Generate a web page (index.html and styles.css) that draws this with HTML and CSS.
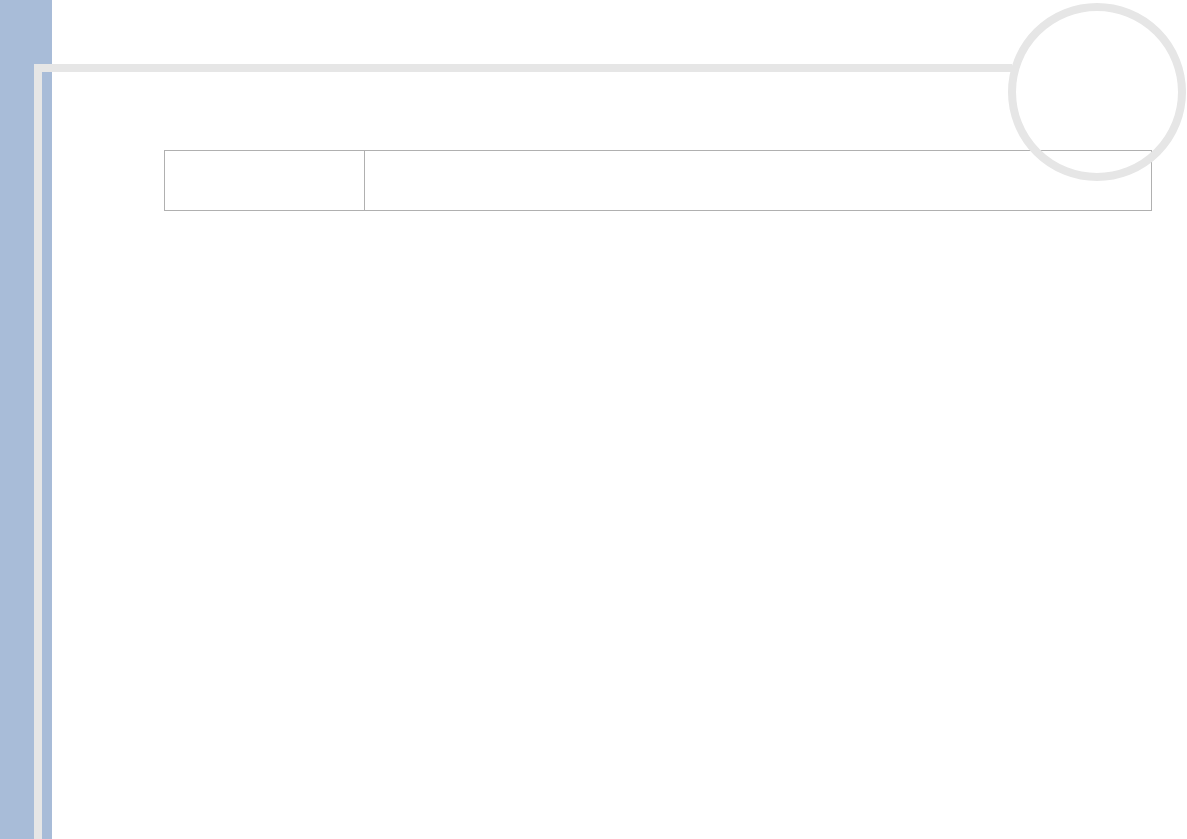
FILE: index.html
```html
<!DOCTYPE html>
<html lang="en">
<head>
    <meta charset="UTF-8">
    <meta name="viewport" content="width=device-width, initial-scale=1.0">
    <title>Page</title>
    <link rel="stylesheet" href="styles.css">
</head>
<body>
    <div class="sidebar"></div>

    <div class="main">
        <div class="rule"></div>
        <div class="frame">
            <table class="info-table">
                <tr>
                    <td class="label-cell"></td>
                    <td class="value-cell"></td>
                </tr>
            </table>
        </div>
    </div>

    <div class="ring"></div>
</body>
</html>
```

FILE: styles.css
```css
* {
    box-sizing: border-box;
    margin: 0;
    padding: 0;
}

body {
    display: flex;
    min-height: 100vh;
    background-color: white;
    font-family: "Liberation Sans", Arial, sans-serif;
}

.sidebar {
    width: 52px;
    flex-shrink: 0;
    background-color: #a8bcd8;
}

.main {
    flex: 1;
    display: flex;
    flex-direction: column;
    margin-left: -18px;
    padding-top: 64px;
}

.rule {
    width: 978px;
    height: 8px;
    background-color: #e6e6e6;
}

.frame {
    flex: 1;
    border-left: 8px solid #e6e6e6;
    padding: 78px 0 0 122px;
}

.info-table {
    width: 988px;
    border-collapse: collapse;
}

.info-table td {
    height: 60px;
    border: 1px solid #b0b0b0;
}

.label-cell {
    width: 200px;
}

/* decorative circle in the top right corner */
.ring {
    position: absolute;
    left: 1008px;
    top: 3px;
    width: 178px;
    height: 178px;
    border: 8px solid #e6e6e6;
    border-radius: 50%;
}
```
